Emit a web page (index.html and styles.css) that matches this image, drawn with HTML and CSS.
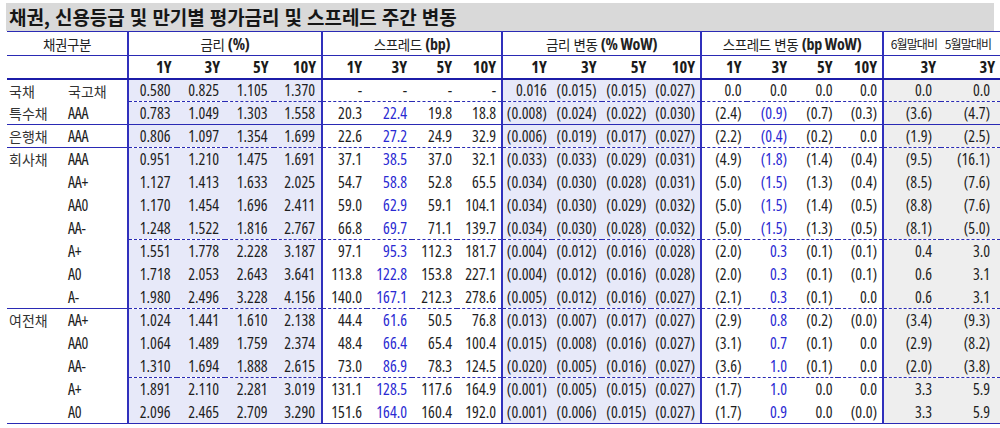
FILE: index.html
```html
<!DOCTYPE html>
<html lang="ko">
<head>
<meta charset="utf-8">
<title>채권, 신용등급 및 만기별 평가금리 및 스프레드 주간 변동</title>
<link rel="stylesheet" href="styles.css">
</head>
<body>
<div class="sheet">
  <h1 class="title">채권, 신용등급 및 만기별 평가금리 및 스프레드 주간 변동</h1>
  <table class="grid">
    <colgroup>
      <col class="w-l1"><col class="w-l2">
      <col class="w-r"><col class="w-r"><col class="w-r"><col class="w-r">
      <col class="w-s"><col class="w-s"><col class="w-s"><col class="w-s">
      <col class="w-c"><col class="w-c"><col class="w-c"><col class="w-c">
      <col class="w-d"><col class="w-d"><col class="w-d"><col class="w-d">
      <col class="w-m6"><col class="w-m5">
    </colgroup>
    <thead>
      <tr class="h1">
        <th colspan="2" class="hl">채권구분</th>
        <th colspan="4" class="hg">금리 <span class="en">(%)</span></th>
        <th colspan="4" class="hg">스프레드 <span class="en">(bp)</span></th>
        <th colspan="4" class="hg">금리 변동 <span class="en">(% WoW)</span></th>
        <th colspan="4" class="hg">스프레드 변동 <span class="en">(bp WoW)</span></th>
        <th class="hg hm">6월말대비</th>
        <th class="hm">5월말대비</th>
      </tr>
      <tr class="h2">
        <th colspan="2"></th>
        <th class="g">1Y</th><th>3Y</th><th>5Y</th><th>10Y</th>
        <th class="g">1Y</th><th>3Y</th><th>5Y</th><th>10Y</th>
        <th class="g">1Y</th><th>3Y</th><th>5Y</th><th>10Y</th>
        <th class="g">1Y</th><th>3Y</th><th>5Y</th><th>10Y</th>
        <th class="g">3Y</th><th>3Y</th>
      </tr>
    </thead>
    <tbody>
      <tr>
        <td>국채</td><td>국고채</td>
        <td>0.580</td><td>0.825</td><td>1.105</td><td>1.370</td>
        <td>-</td><td>-</td><td>-</td><td>-</td>
        <td>0.016</td><td>(0.015)</td><td>(0.015)</td><td>(0.027)</td>
        <td>0.0</td><td>0.0</td><td>0.0</td><td>0.0</td>
        <td>0.0</td><td>0.0</td>
      </tr>
      <tr class="dash">
        <td>특수채</td><td>AAA</td>
        <td>0.783</td><td>1.049</td><td>1.303</td><td>1.558</td>
        <td>20.3</td><td class="b">22.4</td><td>19.8</td><td>18.8</td>
        <td>(0.008)</td><td>(0.024)</td><td>(0.022)</td><td>(0.030)</td>
        <td>(2.4)</td><td class="b">(0.9)</td><td>(0.7)</td><td>(0.3)</td>
        <td>(3.6)</td><td>(4.7)</td>
      </tr>
      <tr class="solid">
        <td>은행채</td><td>AAA</td>
        <td>0.806</td><td>1.097</td><td>1.354</td><td>1.699</td>
        <td>22.6</td><td class="b">27.2</td><td>24.9</td><td>32.9</td>
        <td>(0.006)</td><td>(0.019)</td><td>(0.017)</td><td>(0.027)</td>
        <td>(2.2)</td><td class="b">(0.4)</td><td>(0.2)</td><td>0.0</td>
        <td>(1.9)</td><td>(2.5)</td>
      </tr>
      <tr class="grp">
        <td>회사채</td><td>AAA</td>
        <td>0.951</td><td>1.210</td><td>1.475</td><td>1.691</td>
        <td>37.1</td><td class="b">38.5</td><td>37.0</td><td>32.1</td>
        <td>(0.033)</td><td>(0.033)</td><td>(0.029)</td><td>(0.031)</td>
        <td>(4.9)</td><td class="b">(1.8)</td><td>(1.4)</td><td>(0.4)</td>
        <td>(9.5)</td><td>(16.1)</td>
      </tr>
      <tr>
        <td></td><td>AA+</td>
        <td>1.127</td><td>1.413</td><td>1.633</td><td>2.025</td>
        <td>54.7</td><td class="b">58.8</td><td>52.8</td><td>65.5</td>
        <td>(0.034)</td><td>(0.030)</td><td>(0.028)</td><td>(0.031)</td>
        <td>(5.0)</td><td class="b">(1.5)</td><td>(1.3)</td><td>(0.4)</td>
        <td>(8.5)</td><td>(7.6)</td>
      </tr>
      <tr>
        <td></td><td>AA0</td>
        <td>1.170</td><td>1.454</td><td>1.696</td><td>2.411</td>
        <td>59.0</td><td class="b">62.9</td><td>59.1</td><td>104.1</td>
        <td>(0.034)</td><td>(0.030)</td><td>(0.029)</td><td>(0.032)</td>
        <td>(5.0)</td><td class="b">(1.5)</td><td>(1.4)</td><td>(0.5)</td>
        <td>(8.8)</td><td>(7.6)</td>
      </tr>
      <tr>
        <td></td><td>AA-</td>
        <td>1.248</td><td>1.522</td><td>1.816</td><td>2.767</td>
        <td>66.8</td><td class="b">69.7</td><td>71.1</td><td>139.7</td>
        <td>(0.034)</td><td>(0.030)</td><td>(0.028)</td><td>(0.032)</td>
        <td>(5.0)</td><td class="b">(1.5)</td><td>(1.3)</td><td>(0.5)</td>
        <td>(8.1)</td><td>(5.0)</td>
      </tr>
      <tr class="dash">
        <td></td><td>A+</td>
        <td>1.551</td><td>1.778</td><td>2.228</td><td>3.187</td>
        <td>97.1</td><td class="b">95.3</td><td>112.3</td><td>181.7</td>
        <td>(0.004)</td><td>(0.012)</td><td>(0.016)</td><td>(0.028)</td>
        <td>(2.0)</td><td class="b">0.3</td><td>(0.1)</td><td>(0.1)</td>
        <td>0.4</td><td>3.0</td>
      </tr>
      <tr>
        <td></td><td>A0</td>
        <td>1.718</td><td>2.053</td><td>2.643</td><td>3.641</td>
        <td>113.8</td><td class="b">122.8</td><td>153.8</td><td>227.1</td>
        <td>(0.004)</td><td>(0.012)</td><td>(0.016)</td><td>(0.028)</td>
        <td>(2.0)</td><td class="b">0.3</td><td>(0.1)</td><td>(0.1)</td>
        <td>0.6</td><td>3.1</td>
      </tr>
      <tr>
        <td></td><td>A-</td>
        <td>1.980</td><td>2.496</td><td>3.228</td><td>4.156</td>
        <td>140.0</td><td class="b">167.1</td><td>212.3</td><td>278.6</td>
        <td>(0.005)</td><td>(0.012)</td><td>(0.016)</td><td>(0.027)</td>
        <td>(2.1)</td><td class="b">0.3</td><td>(0.1)</td><td>0.0</td>
        <td>0.6</td><td>3.1</td>
      </tr>
      <tr class="grp">
        <td>여전채</td><td>AA+</td>
        <td>1.024</td><td>1.441</td><td>1.610</td><td>2.138</td>
        <td>44.4</td><td class="b">61.6</td><td>50.5</td><td>76.8</td>
        <td>(0.013)</td><td>(0.007)</td><td>(0.017)</td><td>(0.027)</td>
        <td>(2.9)</td><td class="b">0.8</td><td>(0.2)</td><td>(0.0)</td>
        <td>(3.4)</td><td>(9.3)</td>
      </tr>
      <tr>
        <td></td><td>AA0</td>
        <td>1.064</td><td>1.489</td><td>1.759</td><td>2.374</td>
        <td>48.4</td><td class="b">66.4</td><td>65.4</td><td>100.4</td>
        <td>(0.015)</td><td>(0.008)</td><td>(0.016)</td><td>(0.027)</td>
        <td>(3.1)</td><td class="b">0.7</td><td>(0.1)</td><td>0.0</td>
        <td>(2.9)</td><td>(8.2)</td>
      </tr>
      <tr>
        <td></td><td>AA-</td>
        <td>1.310</td><td>1.694</td><td>1.888</td><td>2.615</td>
        <td>73.0</td><td class="b">86.9</td><td>78.3</td><td>124.5</td>
        <td>(0.020)</td><td>(0.005)</td><td>(0.016)</td><td>(0.027)</td>
        <td>(3.6)</td><td class="b">1.0</td><td>(0.1)</td><td>0.0</td>
        <td>(2.0)</td><td>(3.8)</td>
      </tr>
      <tr class="dash">
        <td></td><td>A+</td>
        <td>1.891</td><td>2.110</td><td>2.281</td><td>3.019</td>
        <td>131.1</td><td class="b">128.5</td><td>117.6</td><td>164.9</td>
        <td>(0.001)</td><td>(0.005)</td><td>(0.015)</td><td>(0.027)</td>
        <td>(1.7)</td><td class="b">1.0</td><td>0.0</td><td>0.0</td>
        <td>3.3</td><td>5.9</td>
      </tr>
      <tr class="last">
        <td></td><td>A0</td>
        <td>2.096</td><td>2.465</td><td>2.709</td><td>3.290</td>
        <td>151.6</td><td class="b">164.0</td><td>160.4</td><td>192.0</td>
        <td>(0.001)</td><td>(0.006)</td><td>(0.015)</td><td>(0.027)</td>
        <td>(1.7)</td><td class="b">0.9</td><td>0.0</td><td>(0.0)</td>
        <td>3.3</td><td>5.9</td>
      </tr>
    </tbody>
  </table>
</div>
</body>
</html>
```

FILE: styles.css
```css
* { box-sizing: border-box; }

body {
  margin: 0;
  background: #ffffff;
  color: #1e1e1e;
  font-family: "Open Sans", "Noto Sans CJK KR", sans-serif;
  font-stretch: 75%;
}

.sheet {
  width: 1000px;
  padding: 3px 0 0 6px;
}

.title {
  margin: 0;
  width: 988px;
  height: 28px;
  padding-left: 3px;
  background: #d9d9d9;
  color: #161616;
  font: 700 19px/28px "Noto Sans CJK KR", sans-serif;
  letter-spacing: -0.1px;
  white-space: nowrap;
}

.grid {
  margin-left: 1px;
  width: 993px;
  border-collapse: collapse;
  table-layout: fixed;
}

.w-l1 { width: 53px; }
.w-l2 { width: 68px; }
.w-r  { width: 48.5px; }
.w-s  { width: 45px; }
.w-c  { width: 49.75px; }
.w-d  { width: 45.5px; }
.w-m6 { width: 58px; }
.w-m5 { width: 59px; }

th, td {
  padding: 0 5px 0 0;
  white-space: nowrap;
  overflow: hidden;
  vertical-align: middle;
  text-align: right;
}

/* header */
thead th {
  font-size: 16.5px;
  font-weight: 700;
  line-height: 18px;
  color: #1a1a1a;
}
.h1 th {
  height: 24px;
  border-top: 1px solid #2a2ab4;
  border-bottom: 1px solid #2a2ab4;
  text-align: center;
  padding: 0;
  font-family: "Noto Sans CJK KR", sans-serif;
  font-weight: 400;
  font-size: 13.5px;
  letter-spacing: -0.4px;
  color: #222;
}
.h1 .en {
  font-family: "Open Sans", sans-serif;
  font-stretch: 75%;
  font-weight: 700;
  font-size: 16px;
  letter-spacing: -0.2px;
}
.h1 .hm {
  text-align: right;
  padding-right: 4px;
  font-size: 12px;
  letter-spacing: -0.9px;
}
.h1 th:last-child { padding-right: 9px; }
.h2 th {
  height: 23px;
  border-bottom: 2px solid #1c1ca8;
}
.hg, .g { border-left: 2px solid #3030bc; }

/* body */
tbody td {
  height: 23px;
  font-size: 16px;
  font-weight: 500;
  line-height: 18px;
  letter-spacing: 0;
}
tbody td:nth-child(1),
tbody td:nth-child(2) {
  text-align: left;
  padding: 0 0 0 2px;
}
tbody td:nth-child(1) {
  font-family: "Noto Sans CJK KR", sans-serif;
  font-size: 14px;
  font-weight: 400;
  color: #333;
}
tbody td:nth-child(2) {
  padding-left: 8px;
  letter-spacing: -0.3px;
}
tbody tr:first-child td:nth-child(2) {
  font-family: "Noto Sans CJK KR", sans-serif;
  font-size: 14px;
  font-weight: 400;
  letter-spacing: 0;
  color: #333;
}

/* column groups */
tbody td:nth-child(n+3):nth-child(-n+6),
tbody td:nth-child(n+11):nth-child(-n+14) { background: #e7e9f9; }
tbody td:nth-child(n+19) { background: #eeeeee; }

tbody td:nth-child(3),
tbody td:nth-child(7),
tbody td:nth-child(11),
tbody td:nth-child(15),
tbody td:nth-child(19) { border-left: 2px solid #3030bc; }

tbody td:nth-child(n+3):nth-child(-n+6) { padding-right: 6px; }
tbody td:nth-child(n+11):nth-child(-n+14) { padding-right: 5px; }
tbody td:nth-child(14) { padding-right: 2px; }
tbody td:nth-child(n+15):nth-child(-n+18) { padding-right: 5px; }
tbody td:nth-child(16) { padding-right: 7px; }
tbody td:nth-child(19) { padding-right: 9px; }
tbody td:nth-child(20) { padding-right: 10px; }

.b { color: #2a2ad2; }

/* row separators */
tr.dash td:nth-child(n+3) { border-top: 1px dashed #2a2ab4; }
tr.solid td { border-top: 1px solid #2a2ab4; }
tr.grp td:nth-child(-n+2) { border-top: 1px solid #2a2ab4; }
tr.grp td:nth-child(n+3) { border-top: 1px dashed #2a2ab4; }
tr.last td { border-bottom: 1px solid #2a2ab4; }
```
